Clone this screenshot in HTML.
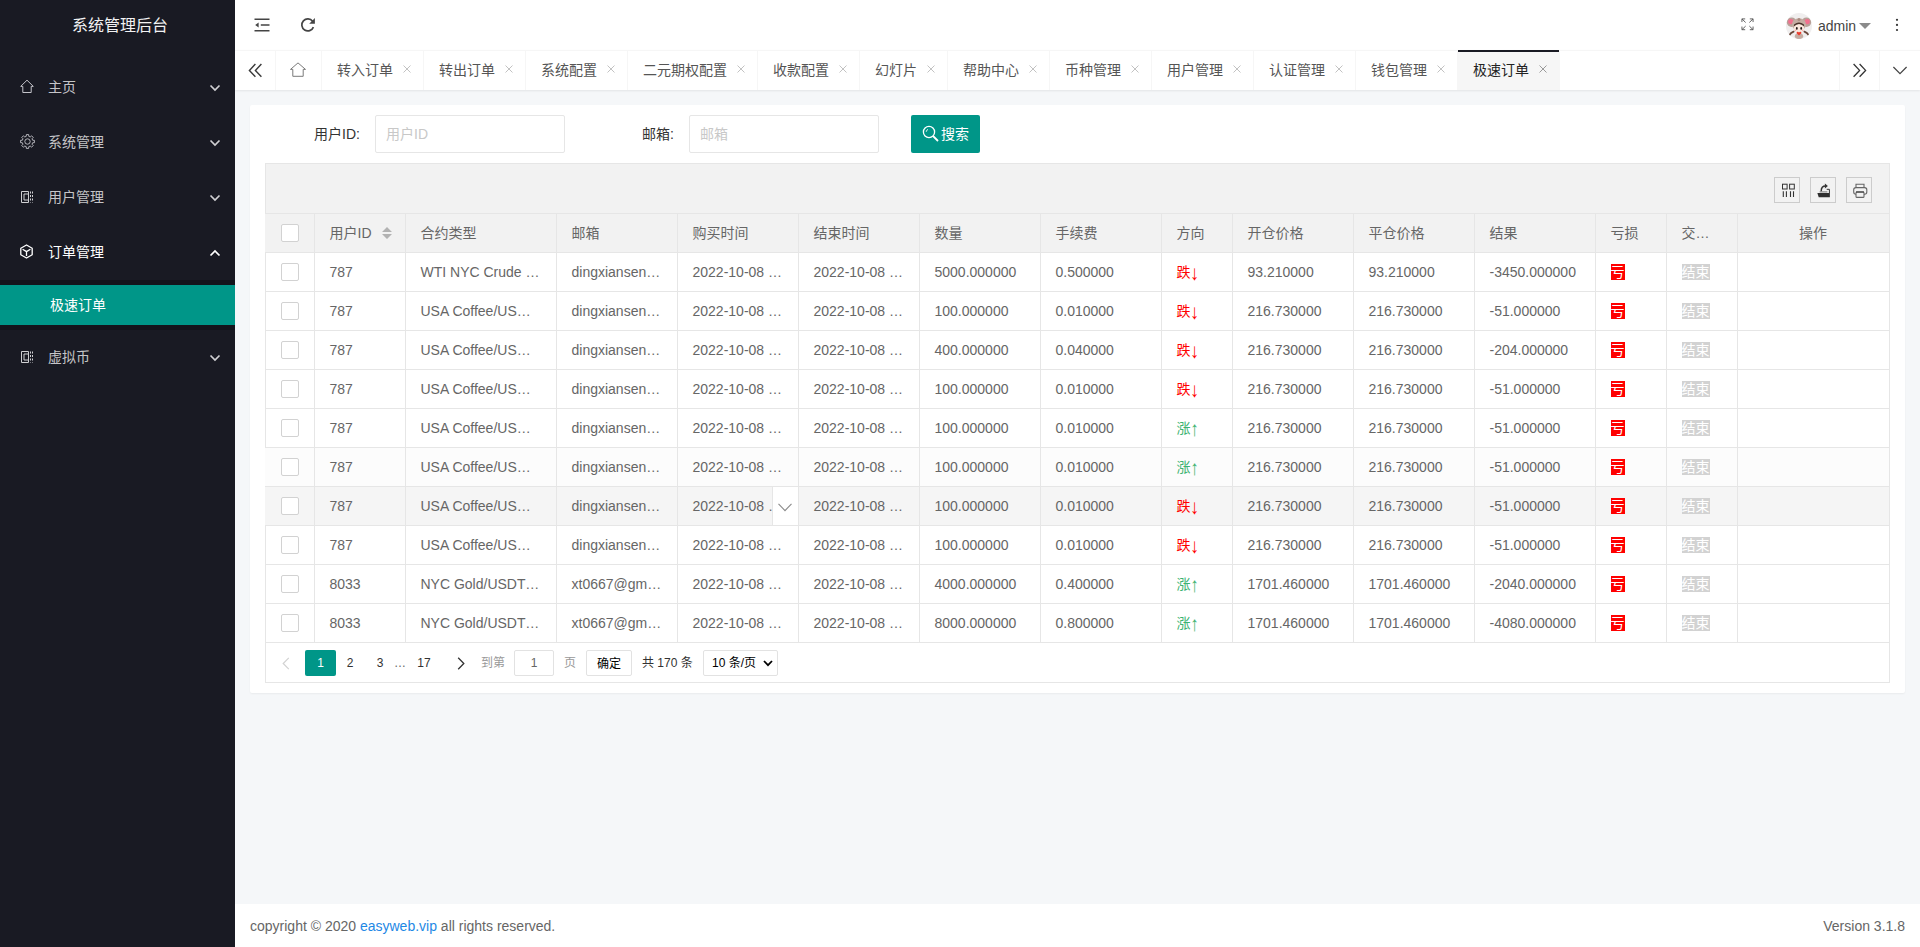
<!DOCTYPE html>
<html lang="zh-CN">
<head>
<meta charset="utf-8">
<title>系统管理后台</title>
<style>
*{box-sizing:border-box;margin:0;padding:0}
html,body{width:1920px;height:947px;overflow:hidden}
body{font-family:"Liberation Sans","Noto Sans CJK SC",sans-serif;font-size:14px;color:#333;background:#f5f7f9;position:relative;line-height:24px}
ul,li{list-style:none}
svg{display:block}
/* side */
.side{position:absolute;left:0;top:0;width:235px;height:947px;background:#191a23;z-index:5}
.logo{position:absolute;left:0;top:0;width:235px;height:50px;line-height:52px;text-align:center;color:#f2f2f3;font-size:16px;padding-left:5px}
.nav{position:absolute;left:0;top:60px;width:235px}
.nav .it{position:relative;height:55px;line-height:55px;color:rgba(255,255,255,.75);padding-left:48px;font-size:14px}
.nav .it.on{color:#fff}
.nav .it .ic{position:absolute;left:20px;top:20px;width:14px;height:14px}
.nav .it.on .ic{left:19.4px;top:19.4px}
.nav .it .ar{position:absolute;left:209px;top:24px}
.nav .child{background:#13141b;padding:5px 0;height:50px}
.nav .child div{height:40px;line-height:40px;background:#009688;color:#fff;padding-left:50px}
/* header */
.header{position:absolute;left:235px;top:0;width:1685px;height:50px;background:#fff}
.header .hi{position:absolute}
.header .name{position:absolute;left:1583px;top:1px;line-height:51px;font-size:14px;color:#444}
.avatar{position:absolute;left:1551px;top:13px;width:26px;height:26px;border-radius:50%;overflow:hidden}
/* tabs */
.tabs{position:absolute;left:235px;top:50px;width:1685px;height:40px;background:#fff;border-top:1px solid #f6f6f6;box-shadow:0 1px 2px 0 rgba(0,0,0,.08);z-index:3}
.tabs .ctl{position:absolute;top:-1px;height:40px;border-right:1px solid #f6f6f6;color:#333}
.tabs .ctl svg{position:absolute}
.tabs ul{position:absolute;left:87px;top:-1px;height:40px;white-space:nowrap;display:flex}
.tabs li{position:relative;height:40px;line-height:40px;padding:0 30px 0 15px;border-right:1px solid #f6f6f6;color:#555;font-size:14px;display:block}
.tabs li .x{position:absolute;right:12px;top:15px;color:#c2c2c2}
.tabs li.this{background:#f6f6f6;color:#222}
.tabs li.this:before{content:"";position:absolute;left:0;top:0;right:0;height:2px;background:#191a23}
.tabs li.this .x{color:#9a9a9a}
/* card */
.card{position:absolute;left:250px;top:105px;width:1655px;height:588px;background:#fff;border-radius:2px;box-shadow:0 1px 2px 0 rgba(0,0,0,.05)}
.lbl{position:absolute;top:115px;height:38px;line-height:38px;text-align:right;color:#333;font-size:14px}
.inp{position:absolute;top:115px;width:190px;height:38px;border:1px solid #e6e6e6;border-radius:2px;background:#fff;line-height:36px;padding-left:10px;color:#c8c8c8;font-size:14px}
.btn{position:absolute;left:911px;top:115px;width:69px;height:38px;line-height:38px;background:#009688;color:#fff;border-radius:2px;font-size:14px}
.btn svg{position:absolute;left:11px;top:10px}
.btn span{position:absolute;left:30px;top:0}
/* table */
.tv{position:absolute;left:265px;top:163px;width:1625px;height:520px;border:1px solid #e6e6e6;background:#fff}
.tool{position:absolute;left:0;top:0;width:1623px;height:50px;background:#f2f2f2;border-bottom:1px solid #e6e6e6}
.tool .tb{position:absolute;top:13px;width:26px;height:26px;border:1px solid #ccc}
.tool .tb svg{position:absolute}
table{position:absolute;left:-1px;top:49px;border-collapse:collapse;border-spacing:0;table-layout:fixed;width:1624px}
th,td{height:39px;border:1px solid #e6e6e6;border-left:none;font-weight:400;text-align:left;font-size:14px;color:#666;padding:0;line-height:28px;white-space:nowrap}
th{background:#f2f2f2;border-top:1px solid #e6e6e6}
.c{padding:0 15px;height:28px;line-height:28px;overflow:hidden;text-overflow:ellipsis;white-space:nowrap}
.w0{width:49px}.w1{width:91px}.w2{width:151px}.w3{width:121px}.w4{width:71px}.w5{width:152px}
.cb{width:18px;height:18px;border:1px solid #d2d2d2;border-radius:2px;background:#fff;margin:0 0 0 16px}
tr.hov td{background:#f5f5f5}
tr.hov2 td{background:#fcfcfc}
.rel{position:relative}
.celldown{position:absolute;right:0;top:0;width:26px;height:38px;background:#fff;border-left:1px solid #e6e6e6}
.celldown svg{position:absolute;left:5px;top:16px}
.dn{color:#f00}.up{color:#3cb371}
.aw{display:inline-block;transform:translate(-0.2px,0.8px) scale(1.25,1.48);transform-origin:50% 50%}
.loss{background:#f00;color:#fff}
.end{background:#d2d2d2;color:#fff}
.sort{position:absolute;left:67px;top:13px}
th.rel{position:relative}
/* pager */
.pager{position:absolute;left:0;top:478px;width:1623px;height:40px;font-size:12px;color:#333}
.pager .p{position:absolute;top:8px;height:26px;line-height:26px;text-align:center}
.pager .cur{background:#009688;color:#fff;border-radius:2px}
.pager .box{border:1px solid #e2e2e2;border-radius:2px;background:#fff;line-height:25px}
/* footer */
.footer{position:absolute;left:235px;top:904px;width:1685px;height:43px;background:#fff;line-height:44px;padding:0 15px;color:#666;font-size:14px}
.footer a{color:#1e88e5;text-decoration:none}
.footer .r{position:absolute;right:15px;top:0}
</style>
</head>
<body>
<div class="side">
  <div class="logo">系统管理后台</div>
  <div class="nav">
    <div class="it"><i class="ic"><svg style="margin-top:-1px" width="15" height="15" viewBox="0 0 15 15"><path d="M7 1.2 L0.7 7.4 H2.8 V13.5 H11.2 V7.4 H13.3 Z" fill="none" stroke="#c4c4ca" stroke-width="1" stroke-linejoin="round"/></svg></i>主页<i class="ar"><svg width="12" height="8" viewBox="0 0 12 8"><path d="M1.5 1.5L6 6L10.5 1.5" fill="none" stroke="#d0d0d3" stroke-width="1.7"/></svg></i></div>
    <div class="it"><i class="ic"><svg style="margin-top:-1px" width="15" height="15" viewBox="0 0 15 15"><path d="M12.64 6.22 L14.41 6.35 L14.41 8.65 L12.64 8.78 L12.04 10.23 L13.20 11.57 L11.57 13.20 L10.23 12.04 L8.78 12.64 L8.65 14.41 L6.35 14.41 L6.22 12.64 L4.77 12.04 L3.43 13.20 L1.80 11.57 L2.96 10.23 L2.36 8.78 L0.59 8.65 L0.59 6.35 L2.36 6.22 L2.96 4.77 L1.80 3.43 L3.43 1.80 L4.77 2.96 L6.22 2.36 L6.35 0.59 L8.65 0.59 L8.78 2.36 L10.23 2.96 L11.57 1.80 L13.20 3.43 L12.04 4.77Z" fill="none" stroke="#c4c4ca" stroke-width="0.9" stroke-linejoin="round"/><circle cx="7.5" cy="7.5" r="2.7" fill="none" stroke="#c4c4ca" stroke-width="0.9"/></svg></i>系统管理<i class="ar"><svg width="12" height="8" viewBox="0 0 12 8"><path d="M1.5 1.5L6 6L10.5 1.5" fill="none" stroke="#d0d0d3" stroke-width="1.7"/></svg></i></div>
    <div class="it"><i class="ic"><svg width="14" height="14" viewBox="0 0 14 14"><path d="M1.5 1.5H8.5V12.5H1.5Z M4 4H8.5 M4 4V10H8.5" fill="none" stroke="#cfcfd2" stroke-width="1"/><path d="M10.5 1.5V12.5 M12.5 1.5V12.5" fill="none" stroke="#cfcfd2" stroke-width="1" stroke-dasharray="2 1.5"/></svg></i>用户管理<i class="ar"><svg width="12" height="8" viewBox="0 0 12 8"><path d="M1.5 1.5L6 6L10.5 1.5" fill="none" stroke="#d0d0d3" stroke-width="1.7"/></svg></i></div>
    <div class="it on"><i class="ic"><svg width="15" height="15" viewBox="0 0 15 15"><path d="M7.5 1 L13.2 4.2 V10.8 L7.5 14 L1.8 10.8 V4.2 Z M3.6 5.2 L7.5 7.6 L11.4 5.2 M7.5 7.6 V12" fill="none" stroke="#fff" stroke-width="1.3" stroke-linejoin="round"/></svg></i>订单管理<i class="ar"><svg width="12" height="8" viewBox="0 0 12 8"><path d="M1.5 6.5L6 2L10.5 6.5" fill="none" stroke="#fff" stroke-width="1.7"/></svg></i></div>
    <div class="child"><div>极速订单</div></div>
    <div class="it"><i class="ic"><svg width="14" height="14" viewBox="0 0 14 14"><path d="M1.5 1.5H8.5V12.5H1.5Z M4 4H8.5 M4 4V10H8.5" fill="none" stroke="#cfcfd2" stroke-width="1"/><path d="M10.5 1.5V12.5 M12.5 1.5V12.5" fill="none" stroke="#cfcfd2" stroke-width="1" stroke-dasharray="2 1.5"/></svg></i>虚拟币<i class="ar"><svg width="12" height="8" viewBox="0 0 12 8"><path d="M1.5 1.5L6 6L10.5 1.5" fill="none" stroke="#d0d0d3" stroke-width="1.7"/></svg></i></div>
  </div>
</div>

<div class="header">
  <i class="hi" style="left:19px;top:18px"><svg width="16" height="14" viewBox="0 0 16 14"><path d="M0.5 1.2H15.5 M6.8 7H15.5 M0.5 12.8H15.5" stroke="#444" stroke-width="1.6" fill="none"/><path d="M4.6 4.6V9.4L1.2 7Z" fill="#444"/></svg></i>
  <i class="hi" style="left:65px;top:17px"><svg width="16" height="16" viewBox="0 0 16 16"><path d="M12.6 4.3A6 6 0 1 0 13.4 10.1" fill="none" stroke="#444" stroke-width="1.7"/><path d="M14.9 1.1V6.7H9.2Z" fill="#444"/></svg></i>
  <i class="hi" style="left:1506px;top:18px"><svg width="13" height="12.6" viewBox="0 0 14 14" preserveAspectRatio="none"><path d="M1 4.5V1H4.5 M1 1L5 5 M9.5 1H13V4.5 M13 1L9 5 M1 9.5V13H4.5 M1 13L5 9 M13 9.5V13H9.5 M13 13L9 9" fill="none" stroke="#555" stroke-width="1"/></svg></i>
  <div class="avatar"><svg width="26" height="26" viewBox="0 0 26 26"><rect width="26" height="26" fill="#f0eeee"/><circle cx="5.6" cy="9.2" r="4.8" fill="#b8a098"/><circle cx="20.4" cy="9.2" r="4.8" fill="#b8a098"/><circle cx="4.8" cy="8.6" r="2.6" fill="#f2708e"/><circle cx="21.2" cy="8.6" r="2.6" fill="#f2708e"/><ellipse cx="13" cy="11.5" rx="7" ry="6.2" fill="#c4aca2"/><circle cx="13" cy="6.6" r="1.5" fill="#a88c80"/><ellipse cx="13" cy="15" rx="5.2" ry="4.4" fill="#fbe9df"/><path d="M7.8 13.6 Q13 8.6 18.2 13.6 L18 11.4 Q13 7.4 8 11.4Z" fill="#4e342c"/><ellipse cx="10.8" cy="15.4" rx="0.9" ry="1.3" fill="#241818"/><ellipse cx="15.2" cy="15.4" rx="0.9" ry="1.3" fill="#241818"/><circle cx="9.3" cy="17.3" r="0.9" fill="#f6b4b0"/><circle cx="16.7" cy="17.3" r="0.9" fill="#f6b4b0"/><path d="M7.6 18.6 Q5 19.6 3 22.4 M18.4 18.6 Q21 19.6 23 22.4" stroke="#6a4638" stroke-width="1.8" fill="none" stroke-linecap="round"/><ellipse cx="13" cy="23.2" rx="4.2" ry="3" fill="#c4aca2"/><path d="M13 22.6 L10.6 20.2 Q10.4 18.8 11.8 18.8 Q12.8 18.9 13 19.8 Q13.2 18.9 14.2 18.8 Q15.6 18.8 15.4 20.2Z" fill="#ee3b2b"/></svg></div>
  <div class="name">admin</div>
  <i class="hi" style="left:1624px;top:23px"><svg width="12" height="6" viewBox="0 0 12 6"><path d="M0 0H12L6 6Z" fill="#8b8b8b"/></svg></i>
  <i class="hi" style="left:1660px;top:18px"><svg width="4" height="14" viewBox="0 0 4 14"><circle cx="2" cy="1.8" r="1.1" fill="#333"/><circle cx="2" cy="6.9" r="1.1" fill="#333"/><circle cx="2" cy="12" r="1.1" fill="#333"/></svg></i>
</div>

<div class="tabs">
  <div class="ctl" style="left:0;width:41px"><svg style="left:13px;top:13px" width="15" height="15" viewBox="0 0 15 15"><path d="M7.4 1L1.4 7.4L7.4 13.8 M13.4 1L7.4 7.4L13.4 13.8" fill="none" stroke="#3a3a3a" stroke-width="1.4"/></svg></div>
  <div class="ctl" style="left:41px;width:46px"><svg style="left:14px;top:12px" width="16" height="16" viewBox="0 0 16 16"><path d="M8 0.9 L0.5 7.4 H2.8 V14.3 H13.2 V7.4 H15.5 Z" fill="none" stroke="#7a7a7a" stroke-width="1" stroke-linejoin="round"/></svg></div>
  <ul><li><span>转入订单</span><i class="x"><svg width="8" height="8" viewBox="0 0 8 8"><path d="M0.5 0.5L7.5 7.5M7.5 0.5L0.5 7.5" stroke="currentColor" stroke-width="1" fill="none"/></svg></i></li><li><span>转出订单</span><i class="x"><svg width="8" height="8" viewBox="0 0 8 8"><path d="M0.5 0.5L7.5 7.5M7.5 0.5L0.5 7.5" stroke="currentColor" stroke-width="1" fill="none"/></svg></i></li><li><span>系统配置</span><i class="x"><svg width="8" height="8" viewBox="0 0 8 8"><path d="M0.5 0.5L7.5 7.5M7.5 0.5L0.5 7.5" stroke="currentColor" stroke-width="1" fill="none"/></svg></i></li><li><span>二元期权配置</span><i class="x"><svg width="8" height="8" viewBox="0 0 8 8"><path d="M0.5 0.5L7.5 7.5M7.5 0.5L0.5 7.5" stroke="currentColor" stroke-width="1" fill="none"/></svg></i></li><li><span>收款配置</span><i class="x"><svg width="8" height="8" viewBox="0 0 8 8"><path d="M0.5 0.5L7.5 7.5M7.5 0.5L0.5 7.5" stroke="currentColor" stroke-width="1" fill="none"/></svg></i></li><li><span>幻灯片</span><i class="x"><svg width="8" height="8" viewBox="0 0 8 8"><path d="M0.5 0.5L7.5 7.5M7.5 0.5L0.5 7.5" stroke="currentColor" stroke-width="1" fill="none"/></svg></i></li><li><span>帮助中心</span><i class="x"><svg width="8" height="8" viewBox="0 0 8 8"><path d="M0.5 0.5L7.5 7.5M7.5 0.5L0.5 7.5" stroke="currentColor" stroke-width="1" fill="none"/></svg></i></li><li><span>币种管理</span><i class="x"><svg width="8" height="8" viewBox="0 0 8 8"><path d="M0.5 0.5L7.5 7.5M7.5 0.5L0.5 7.5" stroke="currentColor" stroke-width="1" fill="none"/></svg></i></li><li><span>用户管理</span><i class="x"><svg width="8" height="8" viewBox="0 0 8 8"><path d="M0.5 0.5L7.5 7.5M7.5 0.5L0.5 7.5" stroke="currentColor" stroke-width="1" fill="none"/></svg></i></li><li><span>认证管理</span><i class="x"><svg width="8" height="8" viewBox="0 0 8 8"><path d="M0.5 0.5L7.5 7.5M7.5 0.5L0.5 7.5" stroke="currentColor" stroke-width="1" fill="none"/></svg></i></li><li><span>钱包管理</span><i class="x"><svg width="8" height="8" viewBox="0 0 8 8"><path d="M0.5 0.5L7.5 7.5M7.5 0.5L0.5 7.5" stroke="currentColor" stroke-width="1" fill="none"/></svg></i></li><li class="this"><span>极速订单</span><i class="x"><svg width="8" height="8" viewBox="0 0 8 8"><path d="M0.5 0.5L7.5 7.5M7.5 0.5L0.5 7.5" stroke="currentColor" stroke-width="1" fill="none"/></svg></i></li></ul>
  <div class="ctl" style="left:1604px;width:40px;border-right:none;border-left:1px solid #f6f6f6"><svg style="left:12px;top:13px" width="15" height="15" viewBox="0 0 15 15"><path d="M1.6 1L7.6 7.4L1.6 13.8 M7.6 1L13.6 7.4L7.6 13.8" fill="none" stroke="#333" stroke-width="1.3"/></svg></div>
  <div class="ctl" style="left:1644px;width:41px;border-right:none;border-left:1px solid #f6f6f6"><svg style="left:12px;top:16px" width="16" height="10" viewBox="0 0 16 10"><path d="M1.4 1L8 7.6L14.6 1" fill="none" stroke="#444" stroke-width="1.2"/></svg></div>
</div>

<div class="card"></div>
<div class="lbl" style="left:280px;width:80px">用户ID:</div>
<div class="inp" style="left:375px">用户ID</div>
<div class="lbl" style="left:594px;width:80px">邮箱:</div>
<div class="inp" style="left:689px">邮箱</div>
<div class="btn"><svg width="17" height="17" viewBox="0 0 17 17"><circle cx="7" cy="7" r="5.6" fill="none" stroke="#fff" stroke-width="1.3"/><path d="M11 11L16 16" stroke="#fff" stroke-width="1.8" fill="none"/><path d="M4.2 6.8A2.8 2.8 0 0 1 6 4.4" stroke="#fff" stroke-width="0.9" fill="none"/></svg><span>搜索</span></div>

<div class="tv">
  <div class="tool">
    <div class="tb" style="left:1508px"><svg style="left:5px;top:5px" width="16" height="16" viewBox="0 0 16 16"><rect x="2.5" y="1.2" width="4.6" height="4.8" fill="none" stroke="#333" stroke-width="1"/><rect x="9.6" y="1.2" width="4.7" height="4.8" fill="none" stroke="#333" stroke-width="1"/><path d="M3.3 8.2V13.9 M6.4 8.2V13.9 M10.5 8.2V13.9 M13.5 8.2V13.9" stroke="#333" stroke-width="1.1" fill="none"/></svg></div>
    <div class="tb" style="left:1544px"><svg style="left:6px;top:5px" width="14" height="16" viewBox="0 0 14 16"><path d="M0.4 9.9H12.9V14.2H1.7Z" fill="#2f2f2f"/><path d="M9.7 6.3H12.4V10" fill="none" stroke="#333" stroke-width="1"/><path d="M2.6 8.9H10.4" stroke="#777" stroke-width="1" fill="none"/><path d="M4.2 8.2C4.2 5 6 3 8.6 3" fill="none" stroke="#333" stroke-width="1.5"/><path d="M7.9 0.5L10.9 3L7.9 5.5Z" fill="#333"/></svg></div>
    <div class="tb" style="left:1580px"><svg style="left:6px;top:5px" width="15" height="16" viewBox="0 0 15 16"><path d="M3 4.6V1.2H11V4.6" fill="none" stroke="#666" stroke-width="1.1"/><rect x="0.7" y="4.6" width="13.1" height="6.6" rx="2.2" fill="none" stroke="#666" stroke-width="1.1"/><rect x="3" y="9" width="8" height="5.4" rx="1" fill="#f2f2f2" stroke="#666" stroke-width="1.1"/><path d="M3 9H11" stroke="#444" stroke-width="1.3"/></svg></div>
  </div>
  <table>
    <thead><tr>
      <th class="w0"><div class="cb"></div></th>
      <th class="w1 rel"><div class="c">用户ID</div><svg class="sort" width="10" height="12" viewBox="0 0 10 12"><path d="M0 5H10L5 0Z M0 7H10L5 12Z" fill="#b2b2b2"/></svg></th>
      <th class="w2"><div class="c">合约类型</div></th>
      <th class="w3"><div class="c">邮箱</div></th>
      <th class="w3"><div class="c">购买时间</div></th>
      <th class="w3"><div class="c">结束时间</div></th>
      <th class="w3"><div class="c">数量</div></th>
      <th class="w3"><div class="c">手续费</div></th>
      <th class="w4"><div class="c">方向</div></th>
      <th class="w3"><div class="c">开仓价格</div></th>
      <th class="w3"><div class="c">平仓价格</div></th>
      <th class="w3"><div class="c">结果</div></th>
      <th class="w4"><div class="c">亏损</div></th>
      <th class="w4"><div class="c">交易状态</div></th>
      <th class="w5"><div class="c" style="text-align:center">操作</div></th>
    </tr></thead>
    <tbody>
<tr><td class="w0"><div class="cb"></div></td><td class="w1"><div class="c">787</div></td><td class="w2"><div class="c">WTI NYC Crude Oil/USDT</div></td><td class="w3"><div class="c">dingxiansen@gmail.com</div></td><td class="w3 rel"><div class="c">2022-10-08 15:14:01</div></td><td class="w3"><div class="c">2022-10-08 15:15:01</div></td><td class="w3"><div class="c">5000.000000</div></td><td class="w3"><div class="c">0.500000</div></td><td class="w4"><div class="c"><span class="dn">跌<span class="aw">↓</span></span></div></td><td class="w3"><div class="c">93.210000</div></td><td class="w3"><div class="c">93.210000</div></td><td class="w3"><div class="c">-3450.000000</div></td><td class="w4"><div class="c"><span class="loss">亏</span></div></td><td class="w4"><div class="c"><span class="end">结束</span></div></td><td class="w5"><div class="c"></div></td></tr>
<tr><td class="w0"><div class="cb"></div></td><td class="w1"><div class="c">787</div></td><td class="w2"><div class="c">USA Coffee/USDT Futures</div></td><td class="w3"><div class="c">dingxiansen@gmail.com</div></td><td class="w3 rel"><div class="c">2022-10-08 15:14:01</div></td><td class="w3"><div class="c">2022-10-08 15:15:01</div></td><td class="w3"><div class="c">100.000000</div></td><td class="w3"><div class="c">0.010000</div></td><td class="w4"><div class="c"><span class="dn">跌<span class="aw">↓</span></span></div></td><td class="w3"><div class="c">216.730000</div></td><td class="w3"><div class="c">216.730000</div></td><td class="w3"><div class="c">-51.000000</div></td><td class="w4"><div class="c"><span class="loss">亏</span></div></td><td class="w4"><div class="c"><span class="end">结束</span></div></td><td class="w5"><div class="c"></div></td></tr>
<tr><td class="w0"><div class="cb"></div></td><td class="w1"><div class="c">787</div></td><td class="w2"><div class="c">USA Coffee/USDT Futures</div></td><td class="w3"><div class="c">dingxiansen@gmail.com</div></td><td class="w3 rel"><div class="c">2022-10-08 15:14:01</div></td><td class="w3"><div class="c">2022-10-08 15:15:01</div></td><td class="w3"><div class="c">400.000000</div></td><td class="w3"><div class="c">0.040000</div></td><td class="w4"><div class="c"><span class="dn">跌<span class="aw">↓</span></span></div></td><td class="w3"><div class="c">216.730000</div></td><td class="w3"><div class="c">216.730000</div></td><td class="w3"><div class="c">-204.000000</div></td><td class="w4"><div class="c"><span class="loss">亏</span></div></td><td class="w4"><div class="c"><span class="end">结束</span></div></td><td class="w5"><div class="c"></div></td></tr>
<tr><td class="w0"><div class="cb"></div></td><td class="w1"><div class="c">787</div></td><td class="w2"><div class="c">USA Coffee/USDT Futures</div></td><td class="w3"><div class="c">dingxiansen@gmail.com</div></td><td class="w3 rel"><div class="c">2022-10-08 15:14:01</div></td><td class="w3"><div class="c">2022-10-08 15:15:01</div></td><td class="w3"><div class="c">100.000000</div></td><td class="w3"><div class="c">0.010000</div></td><td class="w4"><div class="c"><span class="dn">跌<span class="aw">↓</span></span></div></td><td class="w3"><div class="c">216.730000</div></td><td class="w3"><div class="c">216.730000</div></td><td class="w3"><div class="c">-51.000000</div></td><td class="w4"><div class="c"><span class="loss">亏</span></div></td><td class="w4"><div class="c"><span class="end">结束</span></div></td><td class="w5"><div class="c"></div></td></tr>
<tr><td class="w0"><div class="cb"></div></td><td class="w1"><div class="c">787</div></td><td class="w2"><div class="c">USA Coffee/USDT Futures</div></td><td class="w3"><div class="c">dingxiansen@gmail.com</div></td><td class="w3 rel"><div class="c">2022-10-08 15:14:01</div></td><td class="w3"><div class="c">2022-10-08 15:15:01</div></td><td class="w3"><div class="c">100.000000</div></td><td class="w3"><div class="c">0.010000</div></td><td class="w4"><div class="c"><span class="up">涨<span class="aw">↑</span></span></div></td><td class="w3"><div class="c">216.730000</div></td><td class="w3"><div class="c">216.730000</div></td><td class="w3"><div class="c">-51.000000</div></td><td class="w4"><div class="c"><span class="loss">亏</span></div></td><td class="w4"><div class="c"><span class="end">结束</span></div></td><td class="w5"><div class="c"></div></td></tr>
<tr class="hov2"><td class="w0"><div class="cb"></div></td><td class="w1"><div class="c">787</div></td><td class="w2"><div class="c">USA Coffee/USDT Futures</div></td><td class="w3"><div class="c">dingxiansen@gmail.com</div></td><td class="w3 rel"><div class="c">2022-10-08 15:14:01</div></td><td class="w3"><div class="c">2022-10-08 15:15:01</div></td><td class="w3"><div class="c">100.000000</div></td><td class="w3"><div class="c">0.010000</div></td><td class="w4"><div class="c"><span class="up">涨<span class="aw">↑</span></span></div></td><td class="w3"><div class="c">216.730000</div></td><td class="w3"><div class="c">216.730000</div></td><td class="w3"><div class="c">-51.000000</div></td><td class="w4"><div class="c"><span class="loss">亏</span></div></td><td class="w4"><div class="c"><span class="end">结束</span></div></td><td class="w5"><div class="c"></div></td></tr>
<tr class="hov"><td class="w0"><div class="cb"></div></td><td class="w1"><div class="c">787</div></td><td class="w2"><div class="c">USA Coffee/USDT Futures</div></td><td class="w3"><div class="c">dingxiansen@gmail.com</div></td><td class="w3 rel"><div class="c">2022-10-08 15:14:01</div><i class="celldown"><svg width="14" height="9" viewBox="0 0 14 9"><path d="M0.5 0.8 L7 7.6 L13.5 0.8" fill="none" stroke="#8a8a8a" stroke-width="1.1"/></svg></i></td><td class="w3"><div class="c">2022-10-08 15:15:01</div></td><td class="w3"><div class="c">100.000000</div></td><td class="w3"><div class="c">0.010000</div></td><td class="w4"><div class="c"><span class="dn">跌<span class="aw">↓</span></span></div></td><td class="w3"><div class="c">216.730000</div></td><td class="w3"><div class="c">216.730000</div></td><td class="w3"><div class="c">-51.000000</div></td><td class="w4"><div class="c"><span class="loss">亏</span></div></td><td class="w4"><div class="c"><span class="end">结束</span></div></td><td class="w5"><div class="c"></div></td></tr>
<tr><td class="w0"><div class="cb"></div></td><td class="w1"><div class="c">787</div></td><td class="w2"><div class="c">USA Coffee/USDT Futures</div></td><td class="w3"><div class="c">dingxiansen@gmail.com</div></td><td class="w3 rel"><div class="c">2022-10-08 15:14:01</div></td><td class="w3"><div class="c">2022-10-08 15:15:01</div></td><td class="w3"><div class="c">100.000000</div></td><td class="w3"><div class="c">0.010000</div></td><td class="w4"><div class="c"><span class="dn">跌<span class="aw">↓</span></span></div></td><td class="w3"><div class="c">216.730000</div></td><td class="w3"><div class="c">216.730000</div></td><td class="w3"><div class="c">-51.000000</div></td><td class="w4"><div class="c"><span class="loss">亏</span></div></td><td class="w4"><div class="c"><span class="end">结束</span></div></td><td class="w5"><div class="c"></div></td></tr>
<tr><td class="w0"><div class="cb"></div></td><td class="w1"><div class="c">8033</div></td><td class="w2"><div class="c">NYC Gold/USDT Futures</div></td><td class="w3"><div class="c">xt0667@gmail.com</div></td><td class="w3 rel"><div class="c">2022-10-08 15:14:01</div></td><td class="w3"><div class="c">2022-10-08 15:15:01</div></td><td class="w3"><div class="c">4000.000000</div></td><td class="w3"><div class="c">0.400000</div></td><td class="w4"><div class="c"><span class="up">涨<span class="aw">↑</span></span></div></td><td class="w3"><div class="c">1701.460000</div></td><td class="w3"><div class="c">1701.460000</div></td><td class="w3"><div class="c">-2040.000000</div></td><td class="w4"><div class="c"><span class="loss">亏</span></div></td><td class="w4"><div class="c"><span class="end">结束</span></div></td><td class="w5"><div class="c"></div></td></tr>
<tr><td class="w0"><div class="cb"></div></td><td class="w1"><div class="c">8033</div></td><td class="w2"><div class="c">NYC Gold/USDT Futures</div></td><td class="w3"><div class="c">xt0667@gmail.com</div></td><td class="w3 rel"><div class="c">2022-10-08 15:14:01</div></td><td class="w3"><div class="c">2022-10-08 15:15:01</div></td><td class="w3"><div class="c">8000.000000</div></td><td class="w3"><div class="c">0.800000</div></td><td class="w4"><div class="c"><span class="up">涨<span class="aw">↑</span></span></div></td><td class="w3"><div class="c">1701.460000</div></td><td class="w3"><div class="c">1701.460000</div></td><td class="w3"><div class="c">-4080.000000</div></td><td class="w4"><div class="c"><span class="loss">亏</span></div></td><td class="w4"><div class="c"><span class="end">结束</span></div></td><td class="w5"><div class="c"></div></td></tr>
    </tbody>
  </table>
  <div class="pager">
    <div class="p" style="left:16px;width:12px"><svg style="margin-top:7px" width="8" height="13" viewBox="0 0 8 13"><path d="M6.8 0.8L1.2 6.5L6.8 12.2" fill="none" stroke="#d2d2d2" stroke-width="1.2"/></svg></div>
    <div class="p cur" style="left:39px;width:31px">1</div>
    <div class="p" style="left:70px;width:28px">2</div>
    <div class="p" style="left:100px;width:28px">3</div>
    <div class="p" style="left:126px;width:16px;color:#666">…</div>
    <div class="p" style="left:144px;width:28px">17</div>
    <div class="p" style="left:191px;width:12px"><svg style="margin-top:7px" width="8" height="13" viewBox="0 0 8 13"><path d="M1.2 0.8L6.8 6.5L1.2 12.2" fill="none" stroke="#333" stroke-width="1.3"/></svg></div>
    <div class="p" style="left:215px;color:#999">到第</div>
    <div class="p box" style="left:248px;width:40px;color:#666">1</div>
    <div class="p" style="left:298px;color:#999">页</div>
    <div class="p box" style="left:320px;width:46px;color:#000;line-height:27px">确定</div>
    <div class="p" style="left:376px">共 170 条</div>
    <div class="p box" style="left:437px;width:75px;text-align:left;padding-left:8px;color:#000;border-color:#e2e2e2">10 条/页<svg style="position:absolute;right:4px;top:9px" width="10" height="7" viewBox="0 0 10 7"><path d="M1 1L5 5.2L9 1" fill="none" stroke="#000" stroke-width="1.8"/></svg></div>
  </div>
</div>

<div class="footer">copyright © 2020 <a>easyweb.vip</a> all rights reserved.<span class="r">Version 3.1.8</span></div>
</body>
</html>
